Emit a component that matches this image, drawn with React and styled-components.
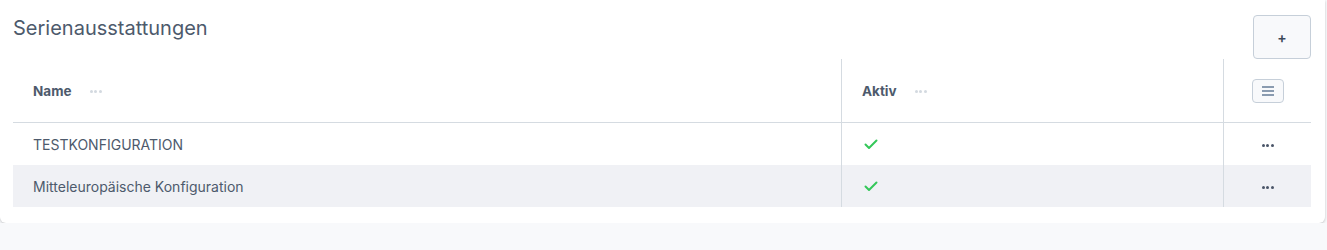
import React from "react";
import styled, { createGlobalStyle } from "styled-components";

const Global = createGlobalStyle`
  html, body { margin: 0; padding: 0; background: #f8f9fb; }
  body { font-family: Inter, "Noto Sans", sans-serif; color: #4a5568; }
`;

const Card = styled.div`
  width: 1325px;
  height: 223px;
  box-sizing: border-box;
  background: #fff;
  border-radius: 0 0 6px 6px;
  box-shadow: 0 1px 3px rgba(0, 0, 0, 0.22);
  padding: 15px 14px 15px 13px;
  display: flex;
  flex-direction: column;
`;

const TopBar = styled.div`
  display: flex;
  justify-content: space-between;
  align-items: flex-start;
  height: 44px;
`;

const Title = styled.h1`
  margin: 0;
  padding-top: 1px;
  font-size: 20px;
  line-height: 24px;
  font-weight: 400;
  color: #4d5a6c;
`;

const AddButton = styled.button`
  width: 58px;
  height: 44px;
  box-sizing: border-box;
  border: 1px solid #c6cfd9;
  border-radius: 4px;
  background: #f8f9fb;
  color: #3c4858;
  font-family: Inter, sans-serif;
  font-size: 14px;
  font-weight: 600;
  display: flex;
  align-items: center;
  justify-content: center;
  padding: 0;
`;

const Table = styled.div`
  display: grid;
  grid-template-columns: 828px 382px 88px;
`;

const Cell = styled.div`
  display: flex;
  align-items: center;
  justify-content: ${(p) => (p.$center ? "center" : "flex-start")};
  height: ${(p) => (p.$head ? "64px" : "42px")};
  padding-left: ${(p) => (p.$center ? "0" : "20px")};
  padding-top: ${(p) => (p.$head ? "0" : "1px")};
  box-sizing: border-box;
  background: ${(p) => (p.$alt ? "#f0f1f5" : "transparent")};
  border-bottom: ${(p) => (p.$head ? "1px solid #d5dbe1" : "none")};
  border-left: ${(p) => (p.$divider ? "1px solid #d5dbe1" : "none")};
  font-size: ${(p) => (p.$head ? "13.5px" : "14px")};
  color: #4d5a6c;
  font-weight: ${(p) => (p.$head ? 700 : 400)};
`;

const Dot = styled.i`
  border-radius: 50%;
  background: ${(p) => p.$color};
  display: block;
`;

const DotGroup = styled.span`
  display: inline-flex;
  gap: 1.5px;
  margin-left: ${(p) => p.$ml || 0}px;
  margin-top: 2px;
`;

const MenuButton = styled.button`
  width: 32px;
  height: 24px;
  box-sizing: border-box;
  border: 1px solid #c6cfd9;
  border-radius: 4px;
  background: #f8f9fb;
  display: flex;
  align-items: center;
  justify-content: center;
  padding: 0;
`;

const Dots = ({ color, ml, size = 3 }) => (
  <DotGroup $ml={ml}>
    {[0, 1, 2].map((i) => (
      <Dot key={i} $color={color} style={{ width: size, height: size }} />
    ))}
  </DotGroup>
);

const Check = () => (
  <svg width="14" height="11" viewBox="0 0 14 11" style={{ marginLeft: 2, marginTop: 0 }}>
    <path d="M1.5 5.5 L5 9 L12.5 1.5" fill="none" stroke="#34c759" strokeWidth="2" strokeLinecap="round" strokeLinejoin="round" />
  </svg>
);

const Hamburger = () => (
  <svg width="14" height="10" viewBox="0 0 14 10">
    <rect x="1" y="0" width="12" height="2" fill="#8a9bb0" />
    <rect x="1" y="4" width="12" height="2" fill="#8a9bb0" />
    <rect x="1" y="8" width="12" height="2" fill="#8a9bb0" />
  </svg>
);

const rows = ["TESTKONFIGURATION", "Mitteleuropäische Konfiguration"];

export default function App() {
  return (
    <>
      <Global />
      <Card>
        <TopBar>
          <Title>Serienausstattungen</Title>
          <AddButton>+</AddButton>
        </TopBar>
        <Table>
          <Cell $head>
            Name
            <Dots color="#d3d9e0" ml={18} />
          </Cell>
          <Cell $head $divider>
            Aktiv
            <Dots color="#d3d9e0" ml={18} />
          </Cell>
          <Cell $head $divider $center>
            <MenuButton>
              <Hamburger />
            </MenuButton>
          </Cell>
          {rows.map((r, i) => (
            <React.Fragment key={r}>
              <Cell $alt={i % 2 === 1}>{r}</Cell>
              <Cell $alt={i % 2 === 1} $divider>
                <Check />
              </Cell>
              <Cell $alt={i % 2 === 1} $divider $center>
                <Dots color="#4a5568" />
              </Cell>
            </React.Fragment>
          ))}
        </Table>
      </Card>
    </>
  );
}
